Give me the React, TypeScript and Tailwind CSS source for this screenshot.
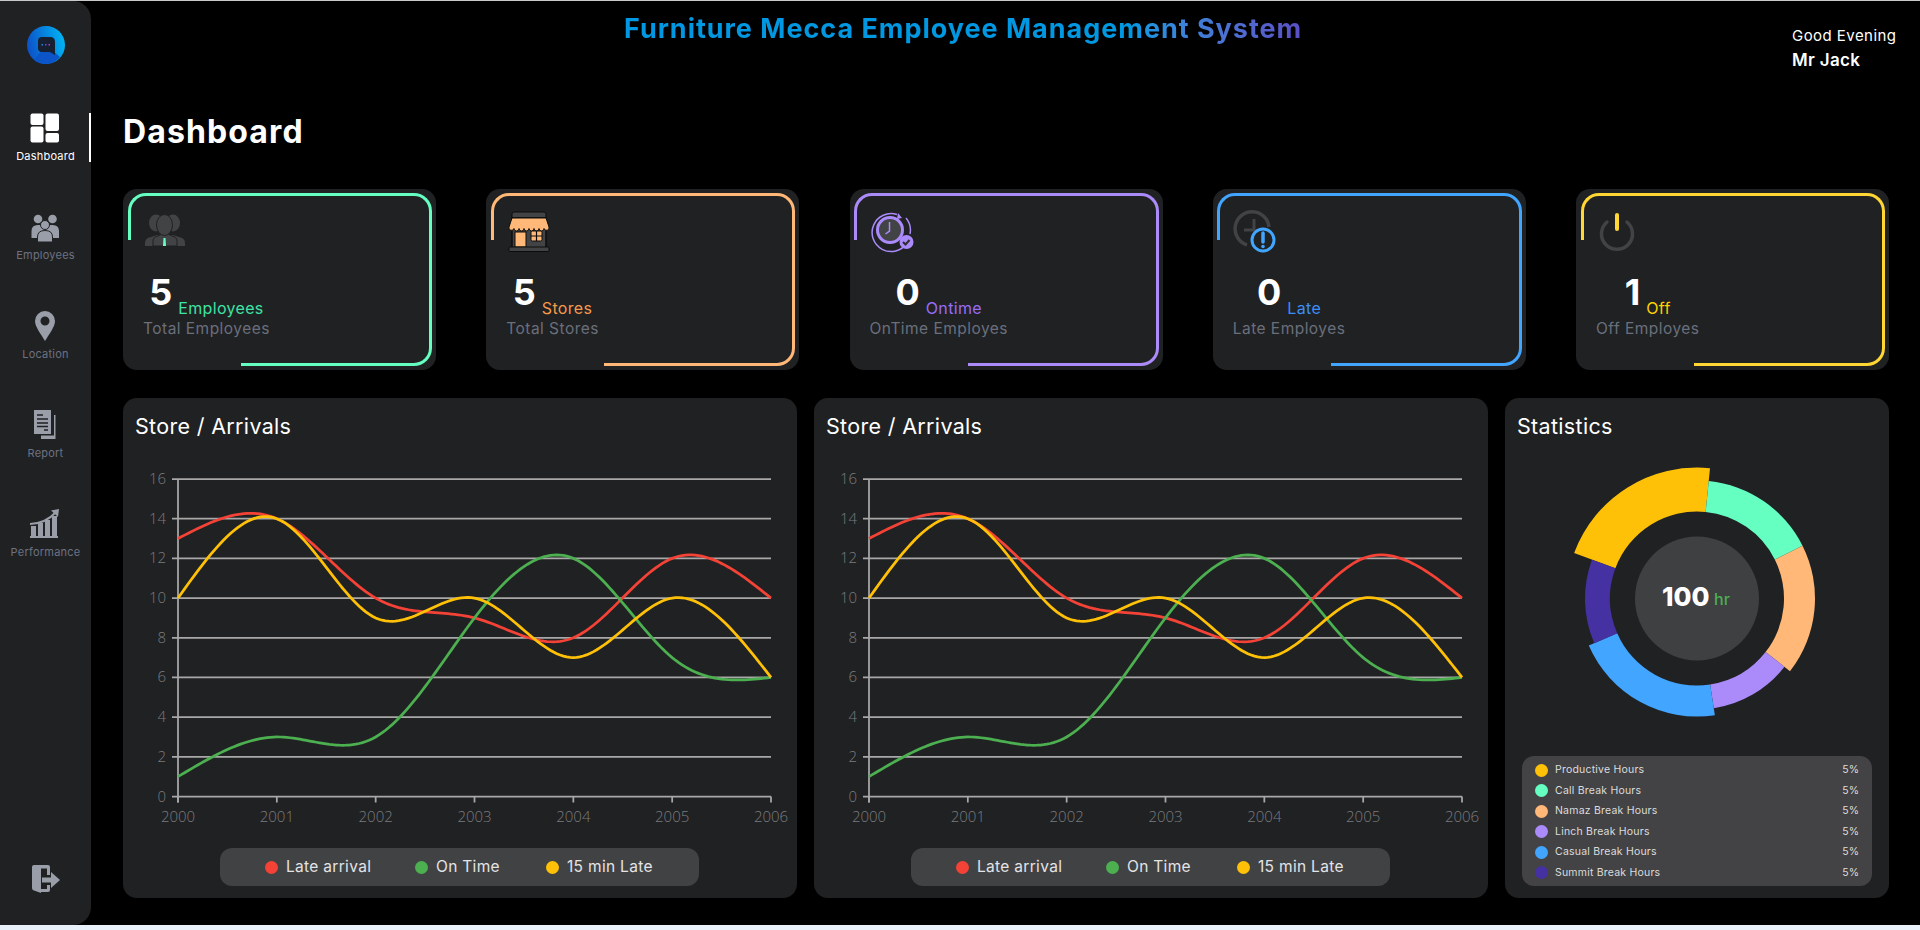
import type { ReactNode } from 'react'

const YEARS = ['2000', '2001', '2002', '2003', '2004', '2005', '2006']
const TICKS = [16, 14, 12, 10, 8, 6, 4, 2, 0]

const SERIES = [
  { name: 'Late arrival', color: '#f44336', data: [13, 14, 10, 9, 8, 12, 10] },
  { name: 'On Time', color: '#4caf50', data: [1, 3, 3, 9, 12, 7, 6] },
  { name: '15 min Late', color: '#ffc107', data: [10, 14, 9, 10, 7, 10, 6] },
]

const PLOT = { left: 55, right: 648, top: 21, bottom: 338.5 }
const xAt = (i: number) => PLOT.left + (i * (PLOT.right - PLOT.left)) / 6
const yAt = (v: number) => PLOT.bottom - (v * (PLOT.bottom - PLOT.top)) / 16

// natural cubic spline, sampled
function splinePath(ys: number[]) {
  const n = ys.length
  const m = new Array(n).fill(0)
  const u = new Array(n).fill(0)
  for (let i = 1; i < n - 1; i++) {
    const p = 0.5 * m[i - 1] + 2
    m[i] = -0.5 / p
    u[i] = (3 * (ys[i + 1] - 2 * ys[i] + ys[i - 1]) - 0.5 * u[i - 1]) / p
  }
  for (let i = n - 2; i >= 0; i--) m[i] = m[i] * m[i + 1] + u[i]
  let d = `M${xAt(0)} ${yAt(ys[0])}`
  for (let i = 0; i < n - 1; i++) {
    for (let s = 1; s <= 30; s++) {
      const b = s / 30
      const a = 1 - b
      const v = a * ys[i] + b * ys[i + 1] + (((a * a * a - a) * m[i] + (b * b * b - b) * m[i + 1]) / 6)
      d += `L${(xAt(i + b)).toFixed(2)} ${yAt(v).toFixed(2)}`
    }
  }
  return d
}

function LineChart() {
  return (
    <svg width="675" height="370" className="block font-['Open_Sans',sans-serif]">
      {TICKS.map((t) => (
        <g key={t}>
          <line x1={PLOT.left - 6} x2={PLOT.right} y1={yAt(t)} y2={yAt(t)} stroke="#a8a8a8" strokeWidth="1.75" />
          <text x={PLOT.left - 12} y={yAt(t) + 5} textAnchor="end" fontSize="15" fontWeight="300" fill="#7a7b7d">
            {t}
          </text>
        </g>
      ))}
      <line x1={PLOT.left} x2={PLOT.left} y1={PLOT.top} y2={PLOT.bottom + 6} stroke="#a8a8a8" strokeWidth="1.75" />
      {YEARS.map((y, i) => (
        <g key={y}>
          <line x1={xAt(i)} x2={xAt(i)} y1={PLOT.bottom} y2={PLOT.bottom + 6} stroke="#a8a8a8" strokeWidth="1.75" />
          <text x={xAt(i)} y={PLOT.bottom + 25} textAnchor="middle" fontSize="15" fontWeight="300" fill="#7a7b7d">
            {y}
          </text>
        </g>
      ))}
      {SERIES.map((s) => (
        <path key={s.name} d={splinePath(s.data)} fill="none" stroke={s.color} strokeWidth="2.75" />
      ))}
    </svg>
  )
}

function ChartPanel({ className }: { className: string }) {
  return (
    <section className={`h-[500px] rounded-[14px] bg-[#202123] ${className}`}>
      <h2 className="h-[60px] pt-[13px] pl-[12px] text-[21.5px] leading-[30px] tracking-[0.015em] text-white">
        Store / Arrivals
      </h2>
      <LineChart />
      <div className="mt-[20px] ml-[97px] flex h-[38px] w-[479px] items-center rounded-[12px] bg-[#414244] pl-[45px] text-[15.5px] tracking-[0.02em] text-[#e4e4e4]">
        <div className="flex w-[150px] items-center gap-[8px]">
          <span className="h-[13px] w-[13px] rounded-full bg-[#f44336]" />
          Late arrival
        </div>
        <div className="flex w-[131px] items-center gap-[8px]">
          <span className="h-[13px] w-[13px] rounded-full bg-[#4caf50]" />
          On Time
        </div>
        <div className="flex items-center gap-[8px]">
          <span className="h-[13px] w-[13px] rounded-full bg-[#ffc107]" />
          15 min Late
        </div>
      </div>
    </section>
  )
}

const STAT_SEGMENTS = [
  { color: '#ffc107', from: 290.3, to: 365.7, r: 131 },
  { color: '#64ffc1', from: 5.7, to: 63.4, r: 118 },
  { color: '#ffb877', from: 63.4, to: 128, r: 118 },
  { color: '#ab8afa', from: 128, to: 171.3, r: 111 },
  { color: '#42a5ff', from: 171.3, to: 246.5, r: 118 },
  { color: '#4531a1', from: 246.5, to: 290.3, r: 112 },
]

function polar(r: number, deg: number) {
  const a = (deg * Math.PI) / 180
  return `${(192 + r * Math.sin(a)).toFixed(2)} ${(140.5 - r * Math.cos(a)).toFixed(2)}`
}

function Donut() {
  const inner = 87
  return (
    <svg width="384" height="290" className="block">
      {STAT_SEGMENTS.map((s) => (
        <path
          key={s.color}
          fill={s.color}
          d={`M${polar(inner, s.from)} L${polar(s.r, s.from)} A${s.r} ${s.r} 0 0 1 ${polar(s.r, s.to)} L${polar(inner, s.to)} A${inner} ${inner} 0 0 0 ${polar(inner, s.from)}Z`}
        />
      ))}
      <circle cx="192" cy="140.5" r="62" fill="#3f4042" />
      <text x="157" y="148" fontSize="26" fontWeight="800" fill="#fff">
        100
      </text>
      <text x="209" y="147" fontSize="16" fontWeight="500" fill="#4caf50">
        hr
      </text>
    </svg>
  )
}

const LEGEND = [
  ['Productive Hours', 'bg-[#ffc107]'],
  ['Call Break Hours', 'bg-[#64ffc1]'],
  ['Namaz Break Hours', 'bg-[#ffb877]'],
  ['Linch Break Hours', 'bg-[#ab8afa]'],
  ['Casual Break Hours', 'bg-[#42a5ff]'],
  ['Summit Break Hours', 'bg-[#4531a1]'],
]

function StatisticsPanel() {
  return (
    <section className="h-[500px] flex-1 rounded-[14px] bg-[#202123]">
      <h2 className="h-[60px] pt-[13px] pl-[12px] text-[21.5px] leading-[30px] tracking-[0.015em] text-white">
        Statistics
      </h2>
      <Donut />
      <div className="mx-[17px] mt-[8px] h-[130px] rounded-[12px] bg-[#434345] px-[13px] pt-[4px]">
        {LEGEND.map(([label, dot]) => (
          <div key={label} className="flex h-[20.5px] items-center text-[10.5px] text-[#dcdcdc]">
            <span className={`mr-[7px] h-[13px] w-[13px] rounded-full ${dot}`} />
            <span className="tracking-[0.02em]">{label}</span>
            <span className="ml-auto">5%</span>
          </div>
        ))}
      </div>
    </section>
  )
}

/* ---- card icons ---- */

function TeamIcon() {
  return (
    <svg width="46" height="44" viewBox="0 0 46 44" fill="#424345">
      <ellipse cx="13" cy="13" rx="7" ry="8.500" />
      <ellipse cx="30" cy="13" rx="7" ry="8.500" />
      <path d="M2 36v-3q0-5 6-6l6-2h16l6 2q6 1 6 6v3z" />
      <path d="M10 36v-5q0-4 5-5l4-2h6l4 2q5 1 5 5v5z" stroke="#202123" strokeWidth="1" />
      <ellipse cx="21.500" cy="15" rx="8" ry="10.500" stroke="#202123" strokeWidth="1" />
      <path d="M20.500 28h2l.5 8h-3z" fill="#64ffc1" />
    </svg>
  )
}

function StoreIcon() {
  return (
    <svg width="46" height="44" viewBox="0 0 46 44">
      <rect x="6" y="2" width="34" height="7" rx="2" fill="#424345" stroke="#0d0d0d" />
      <rect x="6" y="8" width="34" height="30" fill="#424345" stroke="#0d0d0d" strokeWidth="1.500" />
      <path d="M6 8h34l3 9a2.500 2.500 0 0 1-5 1.500 2.500 2.500 0 0 1-5 0 2.500 2.500 0 0 1-5 0 2.500 2.500 0 0 1-5 0 2.500 2.500 0 0 1-5 0 2.500 2.500 0 0 1-5 0 2.500 2.500 0 0 1-5 0 2.500 2.500 0 0 1-5-1.500z" fill="#ffb877" stroke="#0d0d0d" />
      <rect x="9" y="22" width="11" height="15" fill="#ffb877" stroke="#0d0d0d" />
      <rect x="25" y="21" width="11" height="10" rx="1.500" fill="#ffb877" stroke="#0d0d0d" />
      <path d="M30.500 21v10M25 26h11" stroke="#0d0d0d" strokeWidth="1.200" />
      <rect x="3" y="37" width="40" height="4.500" rx="1" fill="#424345" stroke="#0d0d0d" />
    </svg>
  )
}

function OntimeIcon() {
  return (
    <svg width="46" height="44" viewBox="0 0 46 44" fill="none">
      <path d="M27 4.500A19 19 0 1 0 37 33M36 8a19 19 0 0 1 4 16" stroke="#ab8afa" strokeWidth="1.500" />
      <path d="M28 3l-1 6 5-1z" fill="#ab8afa" />
      <circle cx="20" cy="20" r="12.500" fill="#424345" stroke="#ab8afa" strokeWidth="3" />
      <path d="M19.500 12v9l-4 3" stroke="#ab8afa" strokeWidth="1.500" />
      <circle cx="36.500" cy="32" r="7" fill="#ab8afa" />
      <path d="M33 32l2.500 2.500 4-4.500" stroke="#2c2d30" strokeWidth="2" />
    </svg>
  )
}

function LateIcon() {
  return (
    <svg width="46" height="44" viewBox="0 0 46 44" fill="none">
      <path d="M14 35A17 17 0 1 1 36 17" stroke="#424345" strokeWidth="3.500" />
      <path d="M21 9v11H11" stroke="#424345" strokeWidth="3" />
      <circle cx="30" cy="30" r="11" fill="#202123" stroke="#42a5ff" strokeWidth="3" />
      <path d="M30 23v9" stroke="#42a5ff" strokeWidth="3.500" strokeLinecap="round" />
      <circle cx="30" cy="36.500" r="1.800" fill="#42a5ff" />
    </svg>
  )
}

function PowerIcon() {
  return (
    <svg width="46" height="44" viewBox="0 0 46 44" fill="none">
      <path d="M11 9a15.500 15.500 0 1 0 20 0" transform="translate(0 3)" stroke="#424345" strokeWidth="3.500" strokeLinecap="round" />
      <path d="M21 5v14" stroke="#ffd633" strokeWidth="4" strokeLinecap="round" />
    </svg>
  )
}

interface StatCardProps {
  icon: ReactNode
  value: string
  unit: string
  label: string
  border: string
  unitColor: string
}

function StatCard({ icon, value, unit, label, border, unitColor }: StatCardProps) {
  return (
    <div className="relative h-[181px] w-[313px] rounded-[14px] bg-[#202123] pt-[21px] pl-[20px]">
      <div className={`absolute top-[4px] right-[100px] left-[4.5px] h-[47px] rounded-tl-[18px] border-t-[3px] border-l-[3px] ${border}`} />
      <div className={`absolute top-[4px] right-[4px] bottom-[4.5px] w-[191px] rounded-tr-[18px] rounded-br-[18px] border-t-[3px] border-r-[3px] border-b-[3px] ${border}`} />
      <div className="inline-flex flex-col items-center">
        <div className="h-[44px] self-start">{icon}</div>
        <div className="mt-[20px] flex h-[36px] items-end gap-[6px]">
          <span className="text-[36px] leading-[36px] font-bold text-white">{value}</span>
          <span className={`-mb-[6px] text-[16px] leading-[15px] tracking-[0.02em] ${unitColor}`}>{unit}</span>
        </div>
        <p className="mt-[9px] text-[15.5px] leading-[20px] tracking-[0.03em] text-[#6a6f7c]">{label}</p>
      </div>
    </div>
  )
}

/* ---- side nav ---- */

const NAV_GREY = '#9a9ea9'

function NavDashboard() {
  return (
    <svg width="30" height="30" viewBox="0 0 30 30" fill="#fff">
      <rect x="0.500" y="0.500" width="13" height="11.500" rx="2" />
      <rect x="0.500" y="13.500" width="13" height="16" rx="2" />
      <rect x="15.500" y="0.500" width="13.500" height="17.500" rx="2" />
      <rect x="15.500" y="20" width="13.500" height="9.500" rx="2" />
    </svg>
  )
}

function NavEmployees() {
  return (
    <svg width="30" height="30" viewBox="0 0 30 30" fill={NAV_GREY}>
      <circle cx="8" cy="7" r="4.300" />
      <circle cx="22.500" cy="7" r="4.300" />
      <path d="M1.500 26v-7q0-6 6.500-6h14.500q6.500 0 6.500 6v7z" />
      <circle cx="15" cy="13" r="4.500" stroke="#202123" />
      <path d="M7.500 30v-5q0-6.500 7.500-6.500t7.500 6.500v5z" stroke="#202123" />
    </svg>
  )
}

function NavLocation() {
  return (
    <svg width="30" height="30" viewBox="0 0 30 30" fill={NAV_GREY}>
      <path fillRule="evenodd" d="M15 0a10 10 0 0 1 10 10c0 6-6 13-10 20C11 23 5 16 5 10A10 10 0 0 1 15 0zm0 5.500a4.500 4.500 0 1 0 0 9 4.500 4.500 0 0 0 0-9z" />
    </svg>
  )
}

function NavReport() {
  return (
    <svg width="30" height="30" viewBox="0 0 30 30">
      <path d="M24 5h1.500v24H11v-3.500h13z" fill={NAV_GREY} />
      <path d="M4 0h17v24H4z" fill={NAV_GREY} />
      <path d="M7 5h6M7 9h11M7 13h11M7 16.500h11M14 20h4" stroke="#202123" strokeWidth="1.500" />
    </svg>
  )
}

function NavPerformance() {
  return (
    <svg width="32" height="30" viewBox="0 0 32 30" fill={NAV_GREY}>
      <path d="M1 29v-2h1V17h5v10h2V14h5v13h2V11h5v16h2V7h5v20h1v2z" />
      <path d="M1 15c11-.500 19-4 26-12" fill="none" stroke={NAV_GREY} strokeWidth="2" />
      <path d="M22 1.500L30 0l-1 8z" />
    </svg>
  )
}

function NavLogout() {
  return (
    <svg width="30" height="30" viewBox="0 0 30 30" fill={NAV_GREY}>
      <path d="M1 3q0-2 2-2h14q2 0 2 2v8h-3V4.500h-6V29l-7-2.500q-2-.5-2-2.500z" />
      <path d="M11 13.500h9V8l9 8-9 8v-5.500h-9z" />
      <path d="M16 21h3v5q0 2-2 2H9v-3h7z" />
    </svg>
  )
}

function Logo() {
  return (
    <svg width="38" height="38" viewBox="0 0 38 38">
      <defs>
        <linearGradient id="logo-ring" x1="0" y1="0.6" x2="1" y2="0.4">
          <stop offset="0" stopColor="#0d4fc7" />
          <stop offset="1" stopColor="#00b4f5" />
        </linearGradient>
      </defs>
      <circle cx="19" cy="19" r="19" fill="url(#logo-ring)" />
      <path d="M19 19l14 12a19 19 0 0 1-14 7 19 19 0 0 1-12-4z" fill="#0b55c9" />
      <path d="M15 11h8q5 0 5 5v13l-5-3h-8q-4 0-4-4v-7q0-4 4-4z" fill="#172030" />
      <rect x="14.500" y="18" width="1.500" height="1.500" fill="#2f7fe0" />
      <rect x="18" y="18" width="1.500" height="1.500" fill="#7c3fe0" />
      <rect x="21.500" y="18" width="1.500" height="1.500" fill="#c42fd8" />
    </svg>
  )
}

function NavItem({ icon, label, active }: { icon: ReactNode; label: string; active?: boolean }) {
  return (
    <a className={`relative flex h-[99px] flex-col items-center ${active ? 'text-white' : 'text-[#6d7282]'}`}>
      <span className="flex h-[30px] -translate-x-[1px] items-center justify-center">{icon}</span>
      <span className="mt-[6px] text-[11px] leading-[14px] tracking-[0.02em]">{label}</span>
      {active && <span className="absolute top-0 right-0 h-[49px] w-[2px] bg-white" />}
    </a>
  )
}

function Sidebar() {
  return (
    <aside className="flex w-[91px] shrink-0 flex-col rounded-r-[18px] bg-[#202123]">
      <div className="flex h-[112px] justify-center pt-[25px]">
        <Logo />
      </div>
      <nav className="flex flex-col">
        <NavItem icon={<NavDashboard />} label="Dashboard" active />
        <NavItem icon={<NavEmployees />} label="Employees" />
        <NavItem icon={<NavLocation />} label="Location" />
        <NavItem icon={<NavReport />} label="Report" />
        <NavItem icon={<NavPerformance />} label="Performance" />
      </nav>
      <div className="mt-auto flex justify-center pb-[31px]">
        <NavLogout />
      </div>
    </aside>
  )
}

export default function App() {
  return (
    <div className="flex h-[930px] w-[1920px] flex-col overflow-hidden bg-black font-[Inter,sans-serif]">
      <div className="h-px bg-[#c9c9c9]" />
      <div className="flex h-[924px]">
        <Sidebar />
        <main className="min-w-0 flex-1 pr-[31px] pl-[32px]">
          <header className="flex h-[100px] items-start">
            <h1 className="mt-[11px] ml-[501px] bg-gradient-to-r from-[#0098e2] from-75% to-[#5a4fc6] bg-clip-text text-[27px] leading-[34px] font-bold tracking-[0.036em] text-transparent">
              Furniture Mecca Employee Management System
            </h1>
            <div className="mt-[25px] ml-auto w-[97px] whitespace-nowrap text-white">
              <p className="text-[15px] leading-[20px] tracking-[0.03em]">Good Evening</p>
              <p className="mt-[4px] text-[17px] leading-[20px] font-semibold tracking-[0.02em]">Mr Jack</p>
            </div>
          </header>
          <h2 className="mt-[11px] text-[32px] leading-[40px] font-bold tracking-[0.035em] text-white">Dashboard</h2>
          <div className="mt-[37px] flex justify-between">
            <StatCard icon={<TeamIcon />} value="5" unit="Employees" label="Total Employees" border="border-[#64ffc1]" unitColor="text-[#3fe3a2]" />
            <StatCard icon={<StoreIcon />} value="5" unit="Stores" label="Total Stores" border="border-[#ffb877]" unitColor="text-[#f59a4c]" />
            <StatCard icon={<OntimeIcon />} value="0" unit="Ontime" label="OnTime Employes" border="border-[#ab8afa]" unitColor="text-[#9a6cf5]" />
            <StatCard icon={<LateIcon />} value="0" unit="Late" label="Late Employes" border="border-[#42a5ff]" unitColor="text-[#3b8ef5]" />
            <StatCard icon={<PowerIcon />} value="1" unit="Off" label="Off Employes" border="border-[#ffd633]" unitColor="text-[#ffd000]" />
          </div>
          <div className="mt-[28px] flex gap-[17px]">
            <ChartPanel className="w-[674px]" />
            <ChartPanel className="w-[674px]" />
            <StatisticsPanel />
          </div>
        </main>
      </div>
      <div className="flex-1 bg-[#e8f0fa]" />
    </div>
  )
}
